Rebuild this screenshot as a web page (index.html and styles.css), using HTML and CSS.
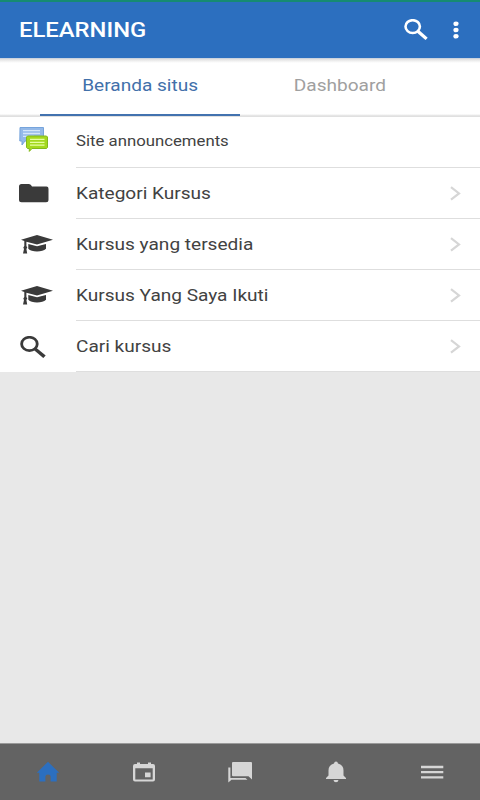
FILE: index.html
```
<!DOCTYPE html>
<html lang="id">
<head>
<meta charset="utf-8">
<title>ELEARNING</title>
<link rel="stylesheet" href="styles.css">
</head>
<body>
<svg class="defs" width="0" height="0">
  <symbol id="search" viewBox="0 0 24 22" preserveAspectRatio="none"><ellipse cx="8.7" cy="7.9" rx="7.2" ry="6.7" fill="none" stroke="currentColor" stroke-width="2.6"/><path d="M13.6 12.6L22.6 20.8" stroke="currentColor" stroke-width="3.3"/></symbol>
  <symbol id="cap" viewBox="0 0 32 19"><path d="M0 4.8L16 0L32 4.8L16 9.6L5.4 6.8V11L6.3 12.5L5.4 14L6.2 18.5H2L3 14L2.3 12.5L3.3 11V6Z" fill="currentColor"/><path d="M7.3 9L16 11.2L25 9V13.8Q22 16.5 16 16.5Q10 16.5 7.3 13.8Z" fill="currentColor"/></symbol>
  <symbol id="chevron" viewBox="0 0 11 15"><path d="M1 1.2L9 7.4L1 13.6" fill="none" stroke="currentColor" stroke-width="2.2"/></symbol>
</svg>
<header class="header">
  <h1 class="title"><span>ELEARNING</span></h1>
  <svg class="header-search"><use href="#search"/></svg>
  <svg class="more" viewBox="0 0 6 18"><g fill="currentColor"><ellipse cx="3" cy="2.7" rx="2.6" ry="2.3"/><ellipse cx="3" cy="9" rx="2.6" ry="2.3"/><ellipse cx="3" cy="15.2" rx="2.6" ry="2.3"/></g></svg>
</header>
<nav class="tabs">
  <a class="tab active"><span>Beranda situs</span></a>
  <a class="tab"><span>Dashboard</span></a>
</nav>
<main class="content">
  <ul class="list">
    <li class="row">
      <svg class="icon forum" viewBox="0 0 29 25"><path d="M1 .5H24.5V14H6L3 18V14H.8Z" fill="#94b9e8" stroke="#76a4dc"/><path d="M4 3.7H21M4 6.5H21M4 9.3H15" stroke="#d4e6fa" stroke-width="1.3"/><path d="M8.5 9H27.5L28.5 10V20.5L27.5 21.5H13L10.3 24.4V21.5H8.5L7.5 20.5V10Z" fill="#a4d91e" stroke="#82b91c"/><path d="M11 12.4H25.5M11 15.3H25.5M11 18.2H25.5" stroke="#e6ffa3" stroke-width="1.3"/></svg>
      <div class="label small"><span>Site announcements</span></div>
    </li>
    <li class="row">
      <svg class="icon folder" viewBox="0 0 30 19"><path d="M2.5 0H10Q12 0 13 2.5H27.5Q29.5 2.5 29.5 4.7V15.8Q29.5 18.3 27 18.3H2.5Q0 18.3 0 15.8V2.5Q0 0 2.5 0Z" fill="currentColor"/></svg>
      <div class="label"><span>Kategori Kursus</span><svg class="chevron"><use href="#chevron"/></svg></div>
    </li>
    <li class="row">
      <svg class="icon cap"><use href="#cap"/></svg>
      <div class="label"><span>Kursus yang tersedia</span><svg class="chevron"><use href="#chevron"/></svg></div>
    </li>
    <li class="row">
      <svg class="icon cap"><use href="#cap"/></svg>
      <div class="label"><span>Kursus Yang Saya Ikuti</span><svg class="chevron"><use href="#chevron"/></svg></div>
    </li>
    <li class="row">
      <svg class="icon search"><use href="#search"/></svg>
      <div class="label"><span>Cari kursus</span><svg class="chevron"><use href="#chevron"/></svg></div>
    </li>
  </ul>
</main>
<footer class="bottom">
  <a class="home"><svg viewBox="0 0 24 22"><path d="M12 .8L23.2 11.8H20.7V20.5H14.6V15.5Q14.6 13.5 12 13.5Q9.4 13.5 9.4 15.5V20.5H3.3V11.8H.8Z" fill="currentColor"/></svg></a>
  <a><svg viewBox="0 0 24 22"><path d="M5 1.5H8V3H16V1.5H19V3H21Q23 3 23 5V18.5Q23 20.5 21 20.5H3Q1 20.5 1 18.5V5Q1 3 3 3H5ZM3.3 7.3V18.5H20.7V7.3ZM13 11.5H18.6V16.3H13Z" fill="currentColor" fill-rule="evenodd"/></svg></a>
  <a><svg viewBox="0 0 24 22"><path d="M5 1H23Q24 1 24 2V18.5L20.5 15.3H5Q4 15.3 4 14.3V2Q4 1 5 1Z" fill="currentColor"/><path d="M.3 6.5H2.4V17H17.5L19.5 18.8H3.5L.3 21.5Z" fill="currentColor"/></svg></a>
  <a><svg viewBox="0 0 24 22"><path d="M12 .5Q13.7 .5 14 2.5Q19.5 3.8 19.5 9.5V14.5L22 17V18H2V17L4.5 14.5V9.5Q4.5 3.8 10 2.5Q10.3 .5 12 .5ZM9.5 19H14.5Q14.2 21.3 12 21.3Q9.8 21.3 9.5 19Z" fill="currentColor"/></svg></a>
  <a><svg viewBox="0 0 24 22"><path d="M1 6H23.3M1 11.2H23.3M1 16.4H23.3" stroke="currentColor" stroke-width="2.3"/></svg></a>
</footer>
</body>
</html>
```
FILE: styles.css
```
* { box-sizing: border-box; }
body {
  margin: 0;
  height: 800px;
  display: flex;
  flex-direction: column;
  overflow: hidden;
  background: #e8e8e8;
  color: #3a3a3a;
  font-family: Roboto, sans-serif;
}
.defs { display: none; }
svg { display: block; flex: none; }
.header {
  height: 58px;
  flex: none;
  display: flex;
  align-items: center;
  padding: 0 21px 0 19px;
  border-top: 2px solid #168b72;
  background: #2c6fbf;
  color: #fff;
}
.title {
  flex: 1;
  margin: 0;
  font-size: 20px;
  line-height: 24px;
  font-weight: 500;
}
.title span, .tab span, .label span {
  display: inline-block;
  white-space: nowrap;
  transform: scaleX(1.155);
}
.title span { transform: scaleX(1.19); }
.title span, .label span { transform-origin: left; }
.header-search { width: 24px; height: 21px; margin: -2px 25px 0 0; }
.more { width: 6px; height: 18px; margin-top: -1px; }
.tabs {
  height: 59px;
  flex: none;
  display: flex;
  padding: 0 40px;
  background: linear-gradient(#b8c8df 0, #dedede 1px, #f0f0f0 3px, #fff 5px, #fff 56px, #dedede 58px, #e2e2e2 59px);
}
.tab {
  flex: 1;
  height: 58px;
  text-align: center;
  font-size: 16.5px;
  line-height: 55px;
  color: #a0a0a0;
}
.tab.active { color: #4270aa; border-bottom: 2px solid #4272af; }
.content { flex: 1; }
.list { list-style: none; margin: 0; padding: 0; background: #fff; }
.row { height: 51px; display: flex; align-items: center; padding-left: 19px; }
.icon { margin-right: auto; }
.label {
  width: 404px;
  height: 51px;
  display: flex;
  align-items: center;
  justify-content: space-between;
  padding-right: 19px;
  border-bottom: 1px solid #dedede;
  font-size: 16.5px;
}
.label span { color: #424242; }
.label.small { font-size: 14.5px; padding-bottom: 2px; }
.chevron { width: 11px; height: 15px; color: #d6d6d6; }
.forum { width: 29px; height: 25px; margin-top: -6px; }
.folder { width: 30px; height: 19px; }
.cap { width: 32px; height: 19px; margin-left: 2px; }
.search { width: 26px; height: 22px; margin-left: 1px; }
.bottom {
  height: 57px;
  flex: none;
  display: flex;
  border-top: 1px solid #999;
  background: #636363;
  color: #d6d6d6;
}
.bottom a { flex: 1; display: flex; align-items: center; justify-content: center; }
.bottom svg { width: 24px; height: 22px; }
.bottom .home { color: #2c6fbf; }
```
